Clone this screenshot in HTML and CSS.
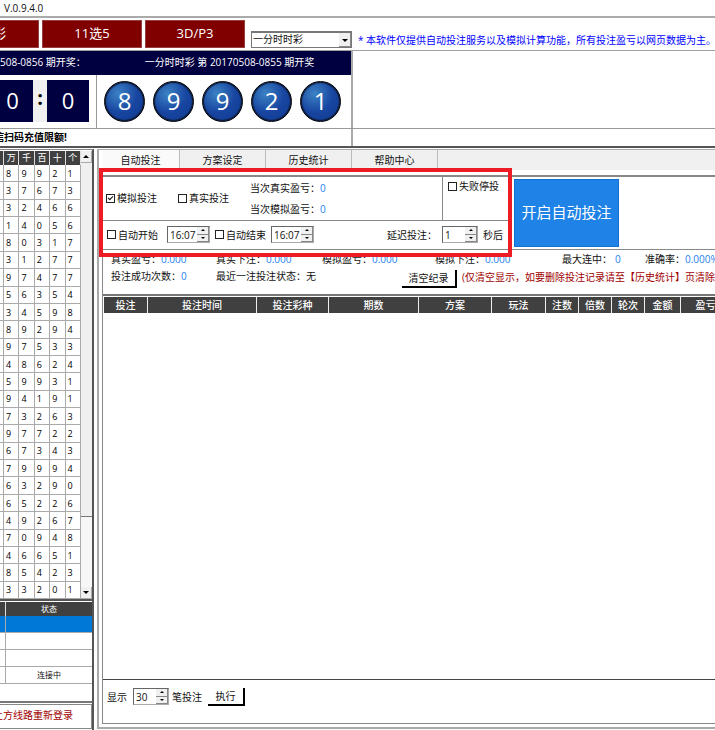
FILE: index.html
```html
<!DOCTYPE html>
<html lang="zh-CN">
<head>
<meta charset="utf-8">
<title>V.0.9.4.0</title>
<link rel="stylesheet" href="styles.css">
</head>
<body>
<div class="app">
  <header class="titlebar">V.0.9.4.0</header>

  <nav class="games">
    <button class="game game-first">彩</button>
    <button class="game">11选5</button>
    <button class="game">3D/P3</button>
    <span class="picker">
      <select aria-label="彩种"><option>一分时时彩</option></select>
      <svg class="picker-arrow" viewBox="0 0 12 14" aria-hidden="true"><rect width="12" height="14" fill="#f0f0f0"/><path d="M12 0V14H0" fill="none" stroke="#888" stroke-width="2"/><path d="M3 6h6L6 9z" fill="#000"/></svg>
    </span>
    <p class="notice">* 本软件仅提供自动投注服务以及模拟计算功能，所有投注盈亏以网页数据为主。</p>
  </nav>

  <section class="draw">
    <div class="draw-main">
      <div class="draw-head"><span class="next">508-0856 期开奖：</span><span class="last">一分时时彩 第 20170508-0855 期开奖</span></div>
      <div class="draw-body">
        <div class="clock"><span class="clock-first">0</span><i>:</i><span>0</span></div>
        <div class="balls"><b>8</b><b>9</b><b>9</b><b>2</b><b>1</b></div>
      </div>
    </div>
    <div class="draw-side"></div>
  </section>
  <section class="ticker"><div class="ticker-text"><span>信扫码充值限额!</span></div></section>

  <main class="work">
    <aside class="left">
      <div class="history">
        <table class="digits">
          <colgroup><col class="c-edge"><col><col><col><col><col></colgroup>
          <thead><tr><th></th><th>万</th><th>千</th><th>百</th><th>十</th><th>个</th></tr></thead>
          <tbody id="digits"></tbody>
        </table>
        <div class="scroll">
          <button aria-label="向上"><svg viewBox="0 0 10 11"><path d="M2 7h6L5 4z"/></svg></button>
          <div class="thumb"></div>
          <div class="track"></div>
          <button aria-label="向下"><svg viewBox="0 0 10 11"><path d="M2 4h6L5 7z"/></svg></button>
        </div>
      </div>
      <div class="status-box">
        <table class="status">
          <colgroup><col class="c-line"><col></colgroup>
          <thead><tr><th></th><th>状态</th></tr></thead>
          <tbody>
            <tr class="selected"><td></td><td></td></tr>
            <tr><td></td><td></td></tr>
            <tr><td></td><td></td></tr>
            <tr><td></td><td>连接中</td></tr>
          </tbody>
        </table>
      </div>
      <p class="relogin"><span>上方线路重新登录</span></p>
    </aside>

    <section class="right">
      <div class="tabs">
        <button class="active">自动投注</button><button>方案设定</button><button>历史统计</button><button>帮助中心</button>
      </div>
      <div class="pane">
        <div class="settings">
          <div class="options">
            <div class="modes">
              <div class="mode-main">
                <label class="check"><input type="checkbox" checked>模拟投注</label>
                <label class="check"><input type="checkbox">真实投注</label>
                <div class="profit">
                  <div>当次真实盈亏：<output>0</output></div>
                  <div>当次模拟盈亏：<output>0</output></div>
                </div>
              </div>
              <div class="mode-stop"><label class="check"><input type="checkbox">失败停投</label></div>
            </div>
            <div class="timing">
              <label class="check check-start"><input type="checkbox">自动开始</label>
              <span class="spin"><input type="text" value="16:07" aria-label="开始时间"><span class="steps"><button aria-label="加"></button><button aria-label="减" class="down"></button></span></span>
              <label class="check"><input type="checkbox">自动结束</label>
              <span class="spin"><input type="text" value="16:07" aria-label="结束时间"><span class="steps"><button aria-label="加"></button><button aria-label="减" class="down"></button></span></span>
              <label class="delay" for="delay">延迟投注：</label>
              <span class="spin spin-short"><input id="delay" type="text" value="1"><span class="steps"><button aria-label="加"></button><button aria-label="减" class="down"></button></span></span>
              <span>秒后</span>
            </div>
          </div>
          <button class="start">开启自动投注</button>
        </div>

        <div class="stats">
          <div class="stats-row">
            <span>真实盈亏：<output>0.000</output></span>
            <span>真实下注：<output>0.000</output></span>
            <span>模拟盈亏：<output>0.000</output></span>
            <span>模拟下注：<output>0.000</output></span>
            <span>最大连中：<output class="gap">0</output></span>
            <span>准确率：<output>0.000%</output></span>
          </div>
          <div class="stats-row stats-second">
            <span>投注成功次数：<output>0</output></span>
            <span>最近一注投注状态：无</span>
            <button class="classic clear">清空纪录</button>
            <span class="warn">(仅清空显示，如要删除投注记录请至【历史统计】页清除所</span>
          </div>
        </div>

        <div class="bets">
          <table>
            <colgroup><col class="w44"><col class="w109"><col class="w72"><col class="w90"><col class="w73"><col class="w54"><col class="w33"><col class="w33"><col class="w33"><col class="w36"><col class="w50"></colgroup>
            <thead><tr><th>投注</th><th>投注时间</th><th>投注彩种</th><th>期数</th><th>方案</th><th>玩法</th><th>注数</th><th>倍数</th><th>轮次</th><th>金额</th><th>盈亏</th></tr></thead>
          </table>
        </div>

        <div class="footer">
          <label for="count">显示</label>
          <span class="spin spin-short"><input id="count" type="text" value="30"><span class="steps"><button aria-label="加"></button><button aria-label="减" class="down"></button></span></span>
          <span>笔投注</span>
          <button class="classic run">执行</button>
        </div>
      </div>
      <div class="highlight"></div>
    </section>
  </main>
</div>
<script src="script.js"></script>
</body>
</html>
```
FILE: styles.css
```css
* { box-sizing: border-box; }

body {
  margin: 0;
  overflow: hidden;
  background: #fff;
  color: #111;
  font: 10px/14px "Open Sans", "Noto Sans CJK SC", sans-serif;
}

button, input, select { font: inherit; color: inherit; margin: 0; padding: 0; }
p { margin: 0; }
table { border-collapse: separate; border-spacing: 0; table-layout: fixed; }
th, td { padding: 0; font-weight: 400; }

.app { display: flex; flex-direction: column; height: 100vh; overflow: hidden; }

.titlebar { height: 18px; padding: 1px 4px; border-bottom: 2px solid #aaa; flex: none; }

/* game buttons */
.games { display: flex; height: 33px; flex: none; gap: 3px; padding-top: 2px; border-bottom: 1px solid #a0a0a0; white-space: nowrap; }
.game { width: 100px; height: 28px; border: 1px solid #964040; background: #800000; color: #fff; font-size: 13px; line-height: 18px; padding-bottom: 2px; flex: none; }
.game-first { display: flex; align-items: center; width: 39px; border-left: 0; text-indent: -7px; overflow: hidden; }
.picker { position: relative; width: 101px; height: 17px; margin: 11px 0 0 3px; flex: none; }
.picker select { width: 100%; height: 17px; border: 1px solid #777; border-top-width: 2px; border-radius: 0; background: #fff; appearance: none; padding: 0 0 1px 1px; line-height: 13px; }
.picker-arrow { position: absolute; right: 1px; top: 2px; width: 12px; height: 14px; pointer-events: none; }
.notice { margin: 13px 0 0 3px; color: #00f; }

/* current draw */
.draw { display: flex; height: 78px; flex: none; border-bottom: 1px solid #999; }
.draw-main { width: 353px; flex: none; border-right: 2px solid #aaa; }
.draw-side { flex: 1; }
.draw-head { display: flex; height: 24px; background: #000040; color: #fff; line-height: 22px; }
.next { width: 110px; flex: none; }
.last { flex: 1; padding-right: 2px; text-align: center; }
.draw-body { display: flex; height: 53px; }
.clock { display: flex; width: 97px; padding-top: 5px; border-right: 1px solid #999; }
.clock span { width: 42px; height: 42px; background: #000040; color: #fff; font-size: 22px; line-height: 40px; text-align: center; }
.clock .clock-first { width: 33px; padding-right: 8px; }
.clock i { width: 14px; height: 42px; background: #f0f0f0; color: #000; font: 700 20px/36px "Open Sans", sans-serif; text-align: center; }
.balls { display: flex; flex: 1; align-items: center; justify-content: center; gap: 8px; padding-right: 3px; }
.balls b { width: 41px; height: 41px; border: 1px solid #000; box-shadow: inset 0 0 1px 1px #101830; border-radius: 50%; background: radial-gradient(circle at 35% 30%, #3c82c4, #1745a0 50%, #103a90); color: #fff; font-size: 24px; font-weight: 400; line-height: 38px; text-align: center; }

.ticker { display: flex; height: 19px; flex: none; border-bottom: 2px solid #555; }
.ticker-text { display: flex; justify-content: flex-end; width: 67px; overflow: hidden; white-space: nowrap; color: #000; font-weight: 700; line-height: 17px; }
.ticker::after { content: ""; width: 284px; border-right: 2px solid #aaa; }

.work { display: flex; flex: 1; min-height: 0; padding-top: 1px; gap: 3px; }

/* left column */
.left { display: flex; flex-direction: column; width: 94px; flex: none; border-right: 2px solid #555; border-top: 1px solid #888; }
.history { display: flex; flex: 1; min-height: 0; padding-top: 1px; border-bottom: 2px solid #555; }
.digits { width: 81px; height: 100%; font-size: 9px; line-height: 12px; color: #000; }
.digits .c-edge { width: 4px; }
.digits th { height: 14px; background: #404040; color: #fff; border-right: 1px solid #ddd; }
.digits td { padding: 1px 0 0 2px; border-right: 1px solid #aaa; border-bottom: 1px solid #aaa; }
.digits td:first-child { padding: 0; }
.scroll { display: flex; flex-direction: column; flex: 1; background: #f7f7f7; }
.scroll button { display: flex; height: 12px; border: 0; border-right: 1px solid #aaa; border-bottom: 1px solid #aaa; background: #f0f0f0; }
.scroll svg { width: 10px; height: 11px; }
.thumb { flex: 5; background: #f0f0f0; border-bottom: 1px solid #777; }
.track { flex: 1; }

.status-box { height: 102px; flex: none; padding-top: 1px; border-bottom: 2px solid #777; }
.status { width: 100%; font-size: 8px; line-height: 12px; }
.status .c-line { width: 6px; }
.status th { height: 14px; background: #404040; color: #fff; }
.status th:first-child { border-right: 1px solid #ddd; }
.status td { height: 17px; border-bottom: 1px solid #aaa; text-align: center; }
.status td:first-child { border-right: 1px solid #aaa; }
.status .selected td { background: #0078d7; }
.relogin { display: flex; justify-content: flex-end; height: 25px; flex: none; margin: 1px 0 1px; padding-right: 18px; border: 1px solid #888; border-left: 0; color: #a00000; line-height: 21px; white-space: nowrap; overflow: hidden; }

/* right column */
.right { position: relative; display: flex; flex-direction: column; flex: 1; min-width: 0; border: 2px solid #aaa; border-top-width: 1px; border-right: 0; margin-bottom: 1px; padding: 0 0 3px 3px; }
.tabs { display: flex; height: 20px; flex: none; margin-bottom: 5px; background: #f0f0f0; }
.tabs button { width: 86px; border: 0; border-right: 1px solid #bbb; background: #f0f0f0; }
.tabs .active { width: 78px; background: #fafafa; }
.pane { display: flex; flex-direction: column; flex: 1; min-height: 0; border: 1px solid #888; border-right: 0; border-top-width: 2px; }

.settings { display: flex; gap: 5px; height: 73px; flex: none; border-bottom: 1px solid #888; }
.options { width: 406px; }
.modes { display: flex; height: 44px; border-bottom: 1px solid #888; }
.mode-main { display: flex; align-items: center; gap: 21px; width: 340px; padding: 0 0 1px 3px; border-right: 1px solid #888; }
.mode-stop { padding: 2px 5px; }
.check { display: inline-flex; align-items: center; gap: 2px; white-space: nowrap; }
.check input { display: block; appearance: none; width: 9px; height: 9px; border: 1px solid #222; background: #fff; }
.check input:checked::before { content: ""; display: block; width: 4px; height: 2px; margin: 1px 0 0 1px; border: solid #111; border-width: 0 0 1px 1px; transform: rotate(-45deg); }
.profit { display: grid; gap: 7px; }
output { color: #1e82f0; }
.timing { display: flex; align-items: center; gap: 5px; height: 28px; padding: 0 0 1px 4px; white-space: nowrap; }
.check-start { margin-right: 4px; }
.delay { margin-left: auto; }
.timing > span:last-child { margin-right: 6px; }
.spin { display: inline-flex; width: 43px; height: 17px; border: 1px solid #aaa; border-top-color: #666; border-left-color: #666; background: #fff; flex: none; }
.spin-short { width: 36px; }
.spin input { flex: 1; width: 20px; min-width: 0; border: 0; padding-left: 2px; background: none; outline: 0; }
.steps { display: flex; flex-direction: column; width: 12px; }
.steps button { position: relative; flex: 1; border: 0; border-right: 1px solid #888; border-bottom: 1px solid #888; background: #f0f0f0; }
.steps button::before { content: ""; display: block; margin: 0 auto; width: 0; border: 2px solid transparent; border-top: 0; border-bottom-color: #000; }
.steps .down::before { border-top: 2px solid #000; border-bottom: 0; }
.start { width: 105px; height: 68px; margin-top: 2px; border: 1px solid #1470d0; background: #1e82e6; color: #fff; font-size: 15px; padding-bottom: 3px; white-space: nowrap; }

.stats { height: 44px; flex: none; padding: 2px 0 0 8px; }
.stats-row { display: grid; grid-template-columns: 105px 106px 113px 127px 83px auto; height: 17px; white-space: nowrap; }
.gap { margin-left: 3px; }
.stats-row.stats-second { display: flex; align-items: flex-start; }
.stats-second > span:first-child { width: 105px; flex: none; }
.stats-second > span:nth-child(2) { width: 186px; flex: none; }
.classic { height: 18px; border: 0; border-right: 2px solid #000; border-bottom: 2px solid #000; background: #fff; }
.clear { width: 55px; margin-top: 1px; flex: none; }
.warn { margin: 1px 0 0 5px; color: #a00000; }

.bets { flex: 1; min-height: 0; overflow: hidden; padding: 1px 0 0 1px; border-top: 2px solid #777; border-bottom: 1px solid #444; }
.bets table { width: 627px; }
.bets th { height: 16px; background: #404040; color: #fff; border-right: 1px solid #eee; line-height: 14px; font-weight: 500; }
.w33 { width: 33px; }
.w36 { width: 36px; }
.w44 { width: 44px; }
.w50 { width: 50px; }
.w54 { width: 54px; }
.w72 { width: 72px; }
.w73 { width: 73px; }
.w90 { width: 90px; }
.w109 { width: 109px; }

.footer { display: flex; align-items: center; height: 43px; flex: none; padding: 0 0 10px 4px; gap: 3px; }
.footer .spin { margin-left: 3px; }
.run { width: 37px; margin-left: 3px; }

.highlight { position: absolute; left: 0; top: 18px; width: 413px; height: 89px; border: 4px solid #ed1c24; pointer-events: none; }
```
FILE: script.js
```js
const draws = ["89921","37673","32466","14056","80317","31277","97477","56354","34598","89294","97533","48624","59931","94191","73263","97722","67343","79994","63290","65226","49267","70948","46651","85423","33201"];
document.getElementById("digits").innerHTML = draws
  .map(d => "<tr><td></td>" + [...d].map(n => `<td>${n}</td>`).join("") + "</tr>")
  .join("");
```
